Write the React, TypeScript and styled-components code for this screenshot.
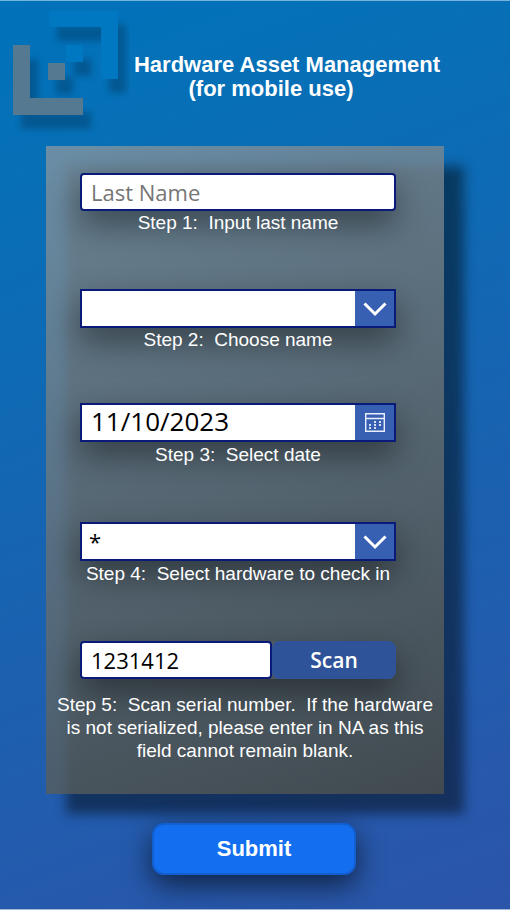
import React, { useState } from "react";
import styled, { createGlobalStyle, css } from "styled-components";

const GlobalStyle = createGlobalStyle`
  *, *::before { box-sizing: border-box; }
  body { margin: 0; font-family: "Liberation Sans", Arial, sans-serif; color: #fff; }
`;

const Page = styled.main`
  isolation: isolate;
  min-height: 100vh;
  display: flex;
  flex-direction: column;
  padding-bottom: 34px;
  border-top: 1px solid #74b4dc;
  border-bottom: 1px solid #a3b7dc;
  background: linear-gradient(160deg, #0072ba 0%, #0670b7 15%, #2659ac 85%, #2b55a8 100%);
`;

const Header = styled.header`
  display: flex;
  align-items: center;
  height: 145px;
  padding: 0 66px 0 0;
`;

const Logo = styled.svg`
  flex: none;
  align-self: flex-start;
  width: 130px;
  height: 140px;
  .mark { filter: drop-shadow(8px 14px 3px rgba(0, 20, 40, 0.26)); }
`;

const Title = styled.h1`
  flex: 1;
  margin: 6px 0 0;
  font-size: 22px;
  line-height: 24px;
  text-align: center;
`;

const TitleNote = styled.span`
  display: block;
  padding-right: 32px;
`;

const Panel = styled.form`
  position: relative;
  margin: 0 66px 0 46px;
  padding: 27px 9px 32px;
  background: linear-gradient(160deg, rgba(132, 149, 161, 0.8), rgba(76, 80, 76, 0.8));

  &::before {
    content: "";
    position: absolute;
    inset: 20px -20px -20px 20px;
    z-index: -1;
    background: rgba(0, 0, 0, 0.45);
    filter: blur(6px);
  }
`;

const Steps = styled.div`
  display: grid;
  grid-template-columns: minmax(0, 1fr);
  grid-template-rows: 116px 114px 119px 119px auto;
`;

const Step = styled.div`
  margin: 0 39px 0 25px;
`;

const Label = styled.label<{ $gap?: number }>`
  display: block;
  padding-top: ${(p) => p.$gap ?? 0}px;
  font-size: 19px;
  line-height: 23px;
  text-align: center;
  white-space: pre-wrap;
  position: relative;
`;

const fieldShadow = css`
  box-shadow: 0 14px 32px rgba(0, 0, 0, 0.42);
`;

const fieldText = css`
  font-family: "Open Sans", "Noto Sans", sans-serif;
  color: #000;
  background: #fff;
  border: 0;
  outline: 0;
`;

const TextInput = styled.input`
  ${fieldText}
  ${fieldShadow}
  display: block;
  width: 100%;
  min-width: 0;
  height: 38px;
  padding: 0 9px;
  font-size: 22px;
  border: 2px solid #0a1a78;
  border-radius: 4px;
  &::placeholder { color: #767676; opacity: 1; }
`;

const Combo = styled.div`
  ${fieldShadow}
  position: relative;
  display: flex;
  height: 39px;
  border: 2px solid #0a1a78;
  background: #fff;
`;

const Select = styled.select`
  ${fieldText}
  appearance: none;
  width: 100%;
  padding: 0 48px 2px 7px;
  font-size: 22px;
`;

const DateInput = styled.input`
  ${fieldText}
  flex: 1;
  min-width: 0;
  padding: 0 9px 4px;
  font-size: 26px;
`;

const arrowBox = css`
  display: flex;
  flex: none;
  align-items: center;
  justify-content: center;
  width: 39px;
  padding: 0;
  border: 0;
  background: #3860b2;
  color: #fff;
`;

const ArrowBox = styled.span`
  ${arrowBox}
  position: absolute;
  inset: 0 0 0 auto;
  pointer-events: none;
`;

const CalendarButton = styled.button`
  ${arrowBox}
  cursor: pointer;
`;

const ScanRow = styled.div`
  ${fieldShadow}
  display: grid;
  grid-template-columns: minmax(0, 192fr) minmax(0, 124fr);
  margin: 0 39px 14px 25px;
  border-radius: 8px;
  ${TextInput} { box-shadow: none; }
`;

const ScanButton = styled.button`
  padding: 0;
  border: 0;
  border-radius: 8px;
  background: #2f5399;
  color: #fff;
  font: 600 21px "Open Sans", "Noto Sans", sans-serif;
  cursor: pointer;
`;

const SubmitButton = styled.button`
  align-self: center;
  width: 204px;
  height: 52px;
  margin: 29px 2px 0 0;
  border: 2px solid #125fd2;
  border-radius: 12px;
  background: #136ff0;
  color: #fff;
  font: bold 22px "Liberation Sans", Arial, sans-serif;
  box-shadow: 0 10px 28px rgba(0, 0, 0, 0.6);
  cursor: pointer;
`;

const Chevron = () => (
  <svg width="24" height="16" viewBox="0 0 24 16" fill="none" stroke="currentColor" strokeWidth="3" aria-hidden="true">
    <path d="M1.5 2.5 12 13 22.5 2.5" />
  </svg>
);

const Calendar = () => (
  <svg width="20" height="19" viewBox="0 0 20 19" aria-hidden="true">
    <path d="M.7.7h18.6v17.6H.7zM.7 5.5h18.6" fill="none" stroke="#e8eefc" strokeWidth="1.4" />
    <path
      d="M9 8h2v2H9zM14 8h2v2h-2zM4 11h2v2H4zM9 11h2v2H9zM14 11h2v2h-2zM4 14h2v2H4zM9 14h2v2H9z"
      fill="#d5e0f7"
    />
  </svg>
);

const BrandLogo = () => (
  <Logo viewBox="0 0 130 140" role="img" aria-label="Company logo">
    <g className="mark">
      <path d="M49 10h69v68h-17V26H49z" fill="#0077c1" />
      <path d="M66 44h17v17H66z" fill="#0077c1" />
      <path d="M48 62h17v17H48z" fill="#557990" />
      <path d="M13 44h17v53h53v17H13z" fill="#557990" />
    </g>
  </Logo>
);

export default function App() {
  const [lastName, setLastName] = useState("");
  const [person, setPerson] = useState("");
  const [date, setDate] = useState("11/10/2023");
  const [hardware, setHardware] = useState("*");
  const [serial, setSerial] = useState("1231412");

  return (
    <>
      <GlobalStyle />
      <Page>
        <Header>
          <BrandLogo />
          <Title>
            Hardware Asset Management
            <TitleNote>(for mobile use)</TitleNote>
          </Title>
        </Header>
        <Panel id="check-in" onSubmit={(e) => e.preventDefault()}>
          <Steps>
            <Step>
              <TextInput
                id="last-name"
                placeholder="Last Name"
                value={lastName}
                onChange={(e) => setLastName(e.target.value)}
              />
              <Label htmlFor="last-name">{"Step 1:  Input last name"}</Label>
            </Step>
            <Step>
              <Combo>
                <Select id="person" value={person} onChange={(e) => setPerson(e.target.value)}>
                  <option value="" />
                </Select>
                <ArrowBox><Chevron /></ArrowBox>
              </Combo>
              <Label htmlFor="person">{"Step 2:  Choose name"}</Label>
            </Step>
            <Step>
              <Combo>
                <DateInput id="date" value={date} onChange={(e) => setDate(e.target.value)} />
                <CalendarButton type="button" aria-label="Open calendar"><Calendar /></CalendarButton>
              </Combo>
              <Label htmlFor="date" $gap={1}>{"Step 3:  Select date"}</Label>
            </Step>
            <Step>
              <Combo>
                <Select id="hardware" value={hardware} onChange={(e) => setHardware(e.target.value)}>
                  <option value="*">*</option>
                </Select>
                <ArrowBox><Chevron /></ArrowBox>
              </Combo>
              <Label htmlFor="hardware" $gap={1}>{"Step 4:  Select hardware to check in"}</Label>
            </Step>
            <div>
              <ScanRow>
                <TextInput id="serial" value={serial} onChange={(e) => setSerial(e.target.value)} />
                <ScanButton type="button">Scan</ScanButton>
              </ScanRow>
              <Label htmlFor="serial">
                {"Step 5:  Scan serial number.  If the hardware is not serialized, please enter in NA as this field cannot remain blank."}
              </Label>
            </div>
          </Steps>
        </Panel>
        <SubmitButton type="submit" form="check-in">Submit</SubmitButton>
      </Page>
    </>
  );
}
